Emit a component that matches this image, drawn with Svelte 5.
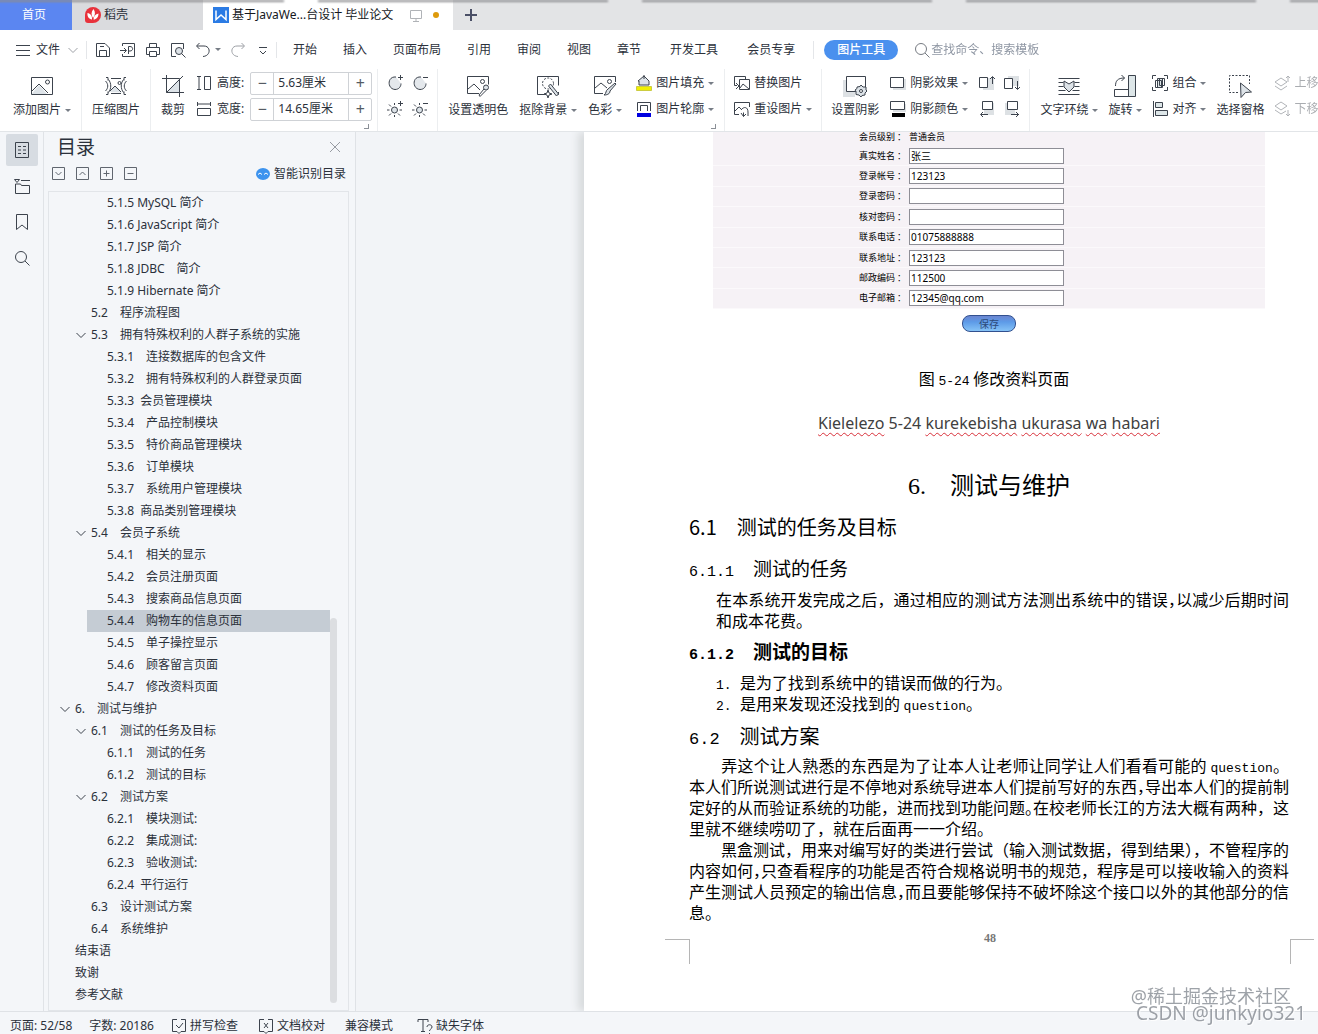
<script lang="ts">
	// Types/constants
	type TocEntry = { depth: 1 | 2 | 3, text: string, open?: boolean }

	const menuTabs = ['开始', '插入', '页面布局', '引用', '审阅', '视图', '章节', '开发工具', '会员专享']

	const toc: TocEntry[] = [
		{ depth: 3, text: '5.1.5 MySQL 简介' },
		{ depth: 3, text: '5.1.6 JavaScript 简介' },
		{ depth: 3, text: '5.1.7 JSP 简介' },
		{ depth: 3, text: '5.1.8 JDBC　简介' },
		{ depth: 3, text: '5.1.9 Hibernate 简介' },
		{ depth: 2, text: '5.2　程序流程图' },
		{ depth: 2, text: '5.3　拥有特殊权利的人群子系统的实施', open: true },
		{ depth: 3, text: '5.3.1　连接数据库的包含文件' },
		{ depth: 3, text: '5.3.2　拥有特殊权利的人群登录页面' },
		{ depth: 3, text: '5.3.3  会员管理模块' },
		{ depth: 3, text: '5.3.4　产品控制模块' },
		{ depth: 3, text: '5.3.5　特价商品管理模块' },
		{ depth: 3, text: '5.3.6　订单模块' },
		{ depth: 3, text: '5.3.7　系统用户管理模块' },
		{ depth: 3, text: '5.3.8  商品类别管理模块' },
		{ depth: 2, text: '5.4　会员子系统', open: true },
		{ depth: 3, text: '5.4.1　相关的显示' },
		{ depth: 3, text: '5.4.2　会员注册页面' },
		{ depth: 3, text: '5.4.3　搜索商品信息页面' },
		{ depth: 3, text: '5.4.4　购物车的信息页面' },
		{ depth: 3, text: '5.4.5　单子操控显示' },
		{ depth: 3, text: '5.4.6　顾客留言页面' },
		{ depth: 3, text: '5.4.7　修改资料页面' },
		{ depth: 1, text: '6.　测试与维护', open: true },
		{ depth: 2, text: '6.1　测试的任务及目标', open: true },
		{ depth: 3, text: '6.1.1　测试的任务' },
		{ depth: 3, text: '6.1.2　测试的目标' },
		{ depth: 2, text: '6.2　测试方案', open: true },
		{ depth: 3, text: '6.2.1　模块测试:' },
		{ depth: 3, text: '6.2.2　集成测试:' },
		{ depth: 3, text: '6.2.3　验收测试:' },
		{ depth: 3, text: '6.2.4  平行运行' },
		{ depth: 2, text: '6.3　设计测试方案' },
		{ depth: 2, text: '6.4　系统维护' },
		{ depth: 1, text: '结束语' },
		{ depth: 1, text: '致谢' },
		{ depth: 1, text: '参考文献' },
	]

	const fields = [
		['真实姓名', '张三'],
		['登录帐号', '123123'],
		['登录密码', ''],
		['核对密码', ''],
		['联系电话', '01075888888'],
		['联系地址', '123123'],
		['邮政编码', '112500'],
		['电子邮箱', '12345@qq.com'],
	]

	// Drawn on a 24 unit grid for large icons, 16 for small ones
	const largeIcons: Record<string, string> = {
		picture: '<path d="M1.5 3.5h21v17h-21z"/><path fill="#dde3e8" d="M2 19.5 9 11l8 9H2z" stroke="none"/><path d="m2 17 7-7 9 9"/><circle cx="17.500" cy="8" r="2"/>',
		compress: '<path d="M7 4.500h10M7 19.500h10"/><path fill="#dde3e8" d="m6 18 5-6 7 6.500z" stroke="none"/><path d="m6 17 5-5 6 6"/><circle cx="15.500" cy="9" r="1.500"/><path d="M2 3.500h2v3M2 20.500h2v-3M22 3.500h-2v3M22 20.500h-2v-3M1.500 7c3 3 3 7 0 10M4.500 5.500c3 4 3 9 0 13M22.500 7c-3 3-3 7 0 10M19.500 5.500c-3 4-3 9 0 13"/>',
		crop: '<path fill="#dde3e8" d="M5 18.500 18 5v13.500z" stroke="none"/><path d="M5.500 1v17.500H23M1 4.500h17.500V23M5.500 18.500 22 2"/>',
		transparent: '<path d="M13 19.500H1.500v-17h21v8"/><path d="m2 15 6-5 6 6"/><circle cx="16.500" cy="7.500" r="2"/><circle cx="20" cy="13.500" r="2.500" fill="#dde3e8"/><path d="m18 15-5 6 1 1.500 6-6"/>',
		matting: '<path d="M10 20.500H1.500v-18h21v9M20 20.500h2.500V18"/><circle cx="12" cy="9.500" r="5.500" stroke-dasharray="2 1.500"/><path fill="#dde3e8" d="m12.500 12 2-2 8 10-2 2z"/><path d="m12 16 1 3 3 1-3 1-1 3-1-3-3-1 3-1z" fill="#fff"/>',
		tint: '<path d="M10 19.500H1.500v-17h21V8"/><path d="m2 14 6-5 6 5"/><circle cx="16.500" cy="7.500" r="2"/><path fill="#dde3e8" d="m15 15 7-6 1 1-6 7c0 3-3 4-6 4 3-2 1-4 4-6z"/>',
		shadow: '<path fill="#dde1e4" stroke="none" d="M0 6h12v17H0z"/><path fill="#fff" d="M3.500 2.500h19v15h-19z"/><path fill="#dde3e8" d="m18 11 2 2h3v3l1 1-2 2v2l-3 .500-1 1.500-2-2-3-.500v-3l-1-1.500 2-1.500v-1.500l3-.500z"/><circle cx="18" cy="17" r="1.500" fill="#fff"/>',
		wrap: '<path d="M1.500 4.500h21M1.500 20.500h21M1.500 8.500h5M1.500 12.500h5M1.500 16.500h7M17.500 8.500h5M17.500 12.500h5M15.500 16.500h7"/><path fill="#dde3e8" d="m7 7 5 3 5-3v6l-5 5-5-5z"/>',
		rotate: '<path fill="#dde6e8" d="M15.500 1.500h7v21h-7z"/><path d="M1.500 15.500h14v7h-14zM2.500 12c0-5 2-8 9-8M8.500 1l3 3-3 3"/>',
		pane: '<path d="M10 18.500H1.500v-17h20V10" stroke-dasharray="2 1.500"/><path fill="#dde3e8" d="m12.500 9 11 9-6 .500-4.500 5z"/>',
	}

	const smallIcons: Record<string, string> = {
		menu: '<path d="M1 3.500h14M1 8.500h14M1 13.500h14"/>',
		save: '<path d="M1.500 1.500H10L14.500 6v8.500h-13zM4.500 14.500v-6h7v6M5 4.500h4"/>',
		exportFile: '<path d="M2.500 4V1.500h12v13h-12V12M0 8.500h6M4 6l2.500 2.500L4 11M8.500 12V4.500H10c3.500 0 3.500 4.500 0 4.500H8.500"/>',
		print: '<path d="M4.500 5V1.500h7V5M4 12.500H1.500V5.500h13v7H12M4.500 9.500h7v5h-7z"/>',
		preview: '<path d="M6 14.500H1.500v-13h12V7"/><circle cx="9" cy="9" r="3.500" fill="#dde3e8"/><path d="m11.500 11.500 4 4"/>',
		undo: '<path d="M4.500 1 1.500 4l3 3M2 4h7c7 0 7 10-1 10.500"/>',
		redo: '<path d="m11.500 1 3 3-3 3M14 4H7c-7 0-7 10 1 10.500"/>',
		expand: '<path d="M4 5.500h8M5 9l3 3 3-3"/>',
		height: '<path d="M1 1.500h4M3 1.500v13M1 14.500h4M8.500 1.500h6v13h-6z"/>',
		width: '<path d="M1.500 1v4M1.500 3h13M14.500 1v4M1.500 7.500h13v7h-13z"/>',
		contrastUp: '<path d="M9 2c-9-1-9 12-1 12.500 4 0 6-3 6-6" fill="#e4e8ec"/><path d="M13.500 0v5M11 2.500h5"/>',
		contrastDown: '<path d="M9 2c-9-1-9 12-1 12.500 4 0 6-3 6-6" fill="#e4e8ec"/><path d="M11 2.500h5"/>',
		brightUp: '<circle cx="7.500" cy="9" r="3" fill="#dde3e8"/><path d="M7.500 2v2M7.500 14v2M0 9h2.500M12.500 9H15M2 3.500 4 5.500M2 14.500l2-2M13 14.500l-2-2M13.500 0v5M11 2.500h5"/>',
		brightDown: '<circle cx="7.500" cy="9" r="3" fill="#dde3e8"/><path d="M7.500 2v2M7.500 14v2M0 9h2.500M12.500 9H15M2 3.500 4 5.500M2 14.500l2-2M13 14.500l-2-2M11 2.500h5"/>',
		fill: '<path fill="#dde3e8" d="M2 6 8 1l5 5v4H3V6zM8 0v4"/><path fill="#f1f000" stroke="#a0a000" stroke-width=".500" d="M.500 11.500h15v4H.500z"/>',
		outline: '<path d="M1.500 10V1.500h13V10M4.500 10V4.500h7V10"/><path fill="#0000e0" stroke="none" d="M1 12h14v4H1z"/>',
		replace: '<path d="M3 10.500H.500v-9h11V4M5.500 4.500h10v10h-10zM6 13l3-4 6 5M2 8l3 3-3 3"/>',
		reset: '<path d="M5 13.500H.500v-12h15V6M1 10l4-4 3 3M7 9c3-4 7-3 7 2v4M9.500 15.500v-4M7 12l2.500 3.500L12 13"/>',
		shadowFx: '<path fill="#dde1e4" stroke="none" d="M3 4h13v11H3z"/><path fill="#fff" d="M.500 2.500h13v10H.500z"/>',
		shadowColor: '<path fill="#dde1e4" stroke="none" d="M3 3h13v8H3z"/><path fill="#fff" d="M.500.500h14v8H.500z"/><path fill="#000" stroke="none" d="M2 12h13v4H2z"/>',
		nudgeUp: '<path fill="#dde1e4" stroke="none" d="M4 3h11v12H4z"/><path fill="#fff" d="M.500 2.500h8v10h-8z"/><path d="M13.500 9V2M11 4l2.500-2.500L16 4"/>',
		nudgeDown: '<path fill="#dde1e4" stroke="none" d="M4 1h11v10H4z"/><path fill="#fff" d="M.500 3.500h8v10h-8z"/><path d="M13.500 6v8M11 12l2.500 2.500L16 12"/>',
		nudgeLeft: '<path fill="#dde1e4" stroke="none" d="M5 2h10v12H5z"/><path fill="#fff" d="M3.500.500h10v8h-10z"/><path d="M9 13.500H2M4 11l-2.500 2.500L4 16"/>',
		nudgeRight: '<path fill="#dde1e4" stroke="none" d="M1 2h10v12H1z"/><path fill="#fff" d="M3.500.500h10v8h-10z"/><path d="M7 13.500h8M12 11l2.500 2.500L12 16"/>',
		group: '<path fill="#dde6e8" d="M5.500 3.500h5v9h-5z"/><path d="M3.500 5.500h6v7h-6zM7.500 3.500h5v7h-5zM.500 4V.500H4M12 .500h3.500V4M.500 12v3.500H4M12 15.500h3.500V12"/>',
		align: '<path d="M1.500 0v16"/><path fill="#dde6e8" d="M3.500 1.500h7v5h-7zM3.500 9.500h12v5h-12z"/>',
		layerUp: '<path d="m7 3 6 4-6 4-6-4zM1 11l6 4 6-4M14 7V1M12 3l2-2 2 2"/>',
		layerDown: '<path d="m7 1 6 4-6 4-6-4zM1 9l6 4 5-3M14 9v6M12 13l2 2 2-2"/>',
		search: '<circle cx="7" cy="7" r="5.500"/><path d="m11 11 4.500 4.500"/>',
		chevron: '<path d="m3.500 6 4.500 4.500L12.500 6"/>',
		close: '<path d="m3 3 10 10M13 3 3 13"/>',
		outlineList: '<path d="M1.500.500h13v15h-13zM4 4.500h3M9 4.500h3M4 8h3M9 8h3M4 11.500h3M9 11.500h3"/>',
		chapters: '<path d="M.500 1.500h5L3 4.500zM7 2.500h9M1.500 6v9.500h14v-8h-8l-1-1.500h-5"/>',
		bookmark: '<path d="M2.500.500h11v15L8 11l-5.500 4.500z"/>',
		boxDown: '<path d="M2.500 2.500h12v12h-12zM5.500 7 8.500 10l3-3"/>',
		boxUp: '<path d="M2.500 2.500h12v12h-12zM5.500 10 8.500 7l3 3"/>',
		boxPlus: '<path d="M2.500 2.500h12v12h-12zM5.500 8.500h6M8.500 5.500v6"/>',
		boxMinus: '<path d="M2.500 2.500h12v12h-12zM5.500 8.500h6"/>',
		spell: '<path d="M6 1.500H1.500v12H6l2 2 2-2h4.500v-12H10M5 7l3 3 4-5"/>',
		proof: '<path d="M6 1.500H1.500v12H6l2 2 2-2h4.500v-12H10M6 5l4 5M10 5l-4 5"/>',
		font: '<path d="M1 4V1.500h10V4M6 1.500v12M4 13.500h4M10 9c0-3 5-3 5 0 0 2-2.500 2-2.500 4M12.500 15v1"/>',
		monitor: '<path d="M2.500 3.500h11v8h-11zM8 12v2M5 14.500h6"/>',
		smart: '<ellipse cx="8" cy="8" rx="7" ry="6" fill="#3d93ee" stroke="none"/><path stroke="#fff" d="M3 8.500 5 7l2 1.500M9 8.500 11 7l2 1.500"/>',
		docer: '<path d="M8 0a8 8 0 1 1 0 16H3a3 3 0 0 1-3-3V8a8 8 0 0 1 8-8z" fill="#e8323c" stroke="none"/><path fill="#fff" stroke="none" d="M8.500 2c2 3 2 6-.500 9-2-3-2-6 .500-9zM2.500 6c3 .500 5 3 4.500 6.500-3-.500-5-3-4.500-6.500zM13.500 6.500c-3 .500-5 2.500-5 6 3 0 5-2.500 5-6z"/>',
		writer: '<path fill="#2b7be4" stroke="none" d="M0 0h16v16H0z"/><path stroke="#fff" stroke-width="1.500" d="M3 3.500v9l5-4.500 5 4.500v-9"/>',
	}


	// State
	let selected = $state('5.4.4　购物车的信息页面')
	let height = $state('5.63厘米')
	let width = $state('14.65厘米')
</script>


{#snippet small(name: string)}
	<svg class="small" viewBox="0 0 16 16" aria-hidden="true">{@html smallIcons[name]}</svg>
{/snippet}

{#snippet bigTool(name: string, label: string, caret = false)}
	<button class="big-tool">
		<svg class="large" viewBox="0 0 24 24" aria-hidden="true">{@html largeIcons[name]}</svg>
		<span class="label" class:caret>{label}</span>
	</button>
{/snippet}

{#snippet rowTool(name: string, label: string, caret = false)}
	<button class="row-tool">
		{@render small(name)}
		<span class="label" class:caret>{label}</span>
	</button>
{/snippet}

{#snippet iconTool(name: string, label: string)}
	<button class="icon-tool" aria-label={label}>{@render small(name)}</button>
{/snippet}


<div class="app">
	<header>
		<div class="file-tabs">
			<div class="edge"><i></i><i></i><i></i><i></i><i></i></div>
			<button class="home">首页</button>
			<button class="docer">{@render small('docer')}稻壳</button>
			<button class="document">
				{@render small('writer')}
				<span>基于JavaWe...台设计 毕业论文</span>
				<span class="monitor">{@render small('monitor')}</span>
				<span class="unsaved"></span>
			</button>
			<button class="add" aria-label="新建"><svg viewBox="0 0 12 12"><path d="M6 0v12M0 6h12" /></svg></button>
		</div>

		<div class="menu">
			<button class="file">{@render small('menu')}<span>文件</span><span class="faded">{@render small('chevron')}</span></button>
			<div class="quick">
				{@render iconTool('save', '保存')}
				{@render iconTool('exportFile', '输出为PDF')}
				{@render iconTool('print', '打印')}
				{@render iconTool('preview', '打印预览')}
				<button class="icon-tool undo caret" aria-label="撤销">{@render small('undo')}</button>
				<button class="icon-tool faded" aria-label="恢复">{@render small('redo')}</button>
				{@render iconTool('expand', '更多')}
			</div>
			<nav class="menu-tabs">
				{#each menuTabs as tab}
					<button class:wide={tab.length === 4 && tab !== '页面布局'}>{tab}</button>
				{/each}
			</nav>
			<button class="picture-tools">图片工具</button>
			<label class="search">
				{@render small('search')}
				<input type="text" placeholder="查找命令、搜索模板" aria-label="查找命令" />
			</label>
		</div>

		<div class="ribbon">
			<div class="group">{@render bigTool('picture', '添加图片', true)}</div>
			<div class="group">{@render bigTool('compress', '压缩图片')}</div>
			<div class="group corner tight">
				{@render bigTool('crop', '裁剪')}
				<div class="stack">
					<div class="size">
						{@render small('height')}
						<label for="pic-height">高度:</label>
						<div class="spinner">
							<button aria-label="减小高度">−</button>
							<input id="pic-height" type="text" bind:value={height} />
							<button aria-label="增大高度">+</button>
						</div>
					</div>
					<div class="size">
						{@render small('width')}
						<label for="pic-width">宽度:</label>
						<div class="spinner">
							<button aria-label="减小宽度">−</button>
							<input id="pic-width" type="text" bind:value={width} />
							<button aria-label="增大宽度">+</button>
						</div>
					</div>
				</div>
			</div>
			<div class="group narrow">
				<div class="pairs">
					{@render iconTool('contrastUp', '增加对比度')}
					{@render iconTool('contrastDown', '降低对比度')}
					{@render iconTool('brightUp', '增加亮度')}
					{@render iconTool('brightDown', '降低亮度')}
				</div>
			</div>
			<div class="group corner">
				{@render bigTool('transparent', '设置透明色')}
				{@render bigTool('matting', '抠除背景', true)}
				{@render bigTool('tint', '色彩', true)}
				<div class="stack spaced">
					{@render rowTool('fill', '图片填充', true)}
					{@render rowTool('outline', '图片轮廓', true)}
				</div>
			</div>
			<div class="group narrow">
				<div class="stack">
					{@render rowTool('replace', '替换图片')}
					{@render rowTool('reset', '重设图片', true)}
				</div>
			</div>
			<div class="group narrow">
				{@render bigTool('shadow', '设置阴影')}
				<div class="stack">
					{@render rowTool('shadowFx', '阴影效果', true)}
					{@render rowTool('shadowColor', '阴影颜色', true)}
				</div>
				<div class="pairs">
					{@render iconTool('nudgeUp', '阴影上移')}
					{@render iconTool('nudgeDown', '阴影下移')}
					{@render iconTool('nudgeLeft', '阴影左移')}
					{@render iconTool('nudgeRight', '阴影右移')}
				</div>
			</div>
			<div class="group">
				{@render bigTool('wrap', '文字环绕', true)}
				{@render bigTool('rotate', '旋转', true)}
				<div class="stack">
					{@render rowTool('group', '组合', true)}
					{@render rowTool('align', '对齐', true)}
				</div>
				{@render bigTool('pane', '选择窗格')}
				<div class="stack disabled">
					{@render rowTool('layerUp', '上移')}
					{@render rowTool('layerDown', '下移')}
				</div>
			</div>
		</div>
	</header>

	<main>
		<aside class="rail">
			<button class="active" aria-label="目录">{@render small('outlineList')}</button>
			<button aria-label="章节">{@render small('chapters')}</button>
			<button aria-label="书签">{@render small('bookmark')}</button>
			<button aria-label="查找">{@render small('search')}</button>
		</aside>

		<aside class="contents">
			<div class="contents-head">
				<h2>目录</h2>
				<button class="icon-tool faded" aria-label="关闭">{@render small('close')}</button>
			</div>
			<div class="contents-tools">
				{@render iconTool('boxDown', '展开')}
				{@render iconTool('boxUp', '收起')}
				{@render iconTool('boxPlus', '增加')}
				{@render iconTool('boxMinus', '减少')}
				<button class="smart">{@render small('smart')}智能识别目录</button>
			</div>
			<div class="tree">
				<ul>
					{#each toc as entry}
						<li class="depth-{entry.depth}">
							<a
								href="#{entry.text.split(/\s/)[0]}"
								class:selected={entry.text === selected}
								onclick={() => { selected = entry.text }}
							>
								<span class="twisty">{#if entry.open}{@render small('chevron')}{/if}</span>
								<span>{entry.text}</span>
							</a>
						</li>
					{/each}
				</ul>
				<div class="scrollbar"><div class="thumb"></div></div>
			</div>
		</aside>

		<section class="workspace">
			<article class="paper">
				<form class="profile" onsubmit={event => event.preventDefault()}>
					<div class="profile-body">
						<div class="level"><span>会员级别 ：</span><span>普通会员</span></div>
						<div class="fields">
							{#each fields as [name, value], i}
								<div class="field">
									<label for="field-{i}">{name} ：</label>
									<input id="field-{i}" type="text" {value} />
								</div>
							{/each}
						</div>
					</div>
					<button class="save">保存</button>
				</form>

				<p class="caption">图 <span class="mono">5-24</span> 修改资料页面</p>
				<p class="translated"><u>Kielelezo</u> 5-24 <u>kurekebisha</u> <u>ukurasa</u> <u>wa</u> <u>habari</u></p>

				<h1><span>6.</span>　测试与维护</h1>
				<h2>6.1　测试的任务及目标</h2>

				<h3><span class="mono">6.1.1</span>　测试的任务</h3>
				<div class="text indented">
					<p class="full">在本系统开发完成之后，通过相应的测试方法测出系统中的错误<i>，</i>以减少后期时间</p>
					<p>和成本花费。</p>
				</div>

				<h3 class="strong"><span class="mono">6.1.2</span>　测试的目标</h3>
				<ol class="text indented">
					<li>是为了找到系统中的错误而做的行为。</li>
					<li>是用来发现还没找到的 <span class="mono">question</span>。</li>
				</ol>

				<h2><span class="mono">6.2</span>　测试方案</h2>
				<div class="text">
					<p class="full">　　弄这个让人熟悉的东西是为了让本人让老师让同学让人们看看可能的 <span class="mono">question</span>。</p>
					<p class="full">本人们所说测试进行是不停地对系统导进本人们提前写好的东西<i>，</i>导出本人们的提前制</p>
					<p class="full">定好的从而验证系统的功能，进而找到功能问题<i>。</i>在校老师长江的方法大概有两种，这</p>
					<p>里就不继续唠叨了，就在后面再一一介绍。</p>
					<p class="full">　　黑盒测试，用来对编写好的类进行尝试（输入测试数据，得到结果<i>）</i>，不管程序的</p>
					<p class="full">内容如何<i>，</i>只查看程序的功能是否符合规格说明书的规范，程序是可以接收输入的资料</p>
					<p class="full">产生测试人员预定的输出信息<i>，</i>而且要能够保持不破坏除这个接口以外的其他部分的信</p>
					<p>息。</p>
				</div>

				<footer><span class="crop-left"></span><b>48</b><span class="crop-right"></span></footer>
			</article>
		</section>
	</main>

	<div class="status">
		<span>页面: 52/58</span>
		<span>字数: 20186</span>
		<button>{@render small('spell')}拼写检查</button>
		<button>{@render small('proof')}文档校对</button>
		<span class="compat">兼容模式</span>
		<button>{@render small('font')}缺失字体</button>
	</div>

	<div class="watermark">
		<div class="site">@稀土掘金技术社区</div>
		<div class="author">CSDN @junkyio321</div>
	</div>
</div>


<style>
	:global(body) {
		margin: 0;
	}

	.app {
		position: relative;
		display: grid;
		grid-template: auto 1fr auto / minmax(0, 1fr);
		min-height: 100vh;
		overflow: hidden;
		background: #f4f6f9;
		color: #2b313b;
		font: 12px/18px "Noto Sans", "Noto Sans CJK SC", sans-serif;
	}

	button,
	input {
		font: inherit;
		color: inherit;
		padding: 0;
		border: none;
		background: none;
		white-space: nowrap;
	}

	h1, h2, h3, p, ul, ol {
		margin: 0;
		padding: 0;
		font-weight: 400;
	}

	svg {
		display: block;
		flex: none;
		fill: none;
		stroke: #3c434d;
	}

	.small {
		width: 16px;
		height: 16px;
	}

	.large {
		width: 24px;
		height: 24px;
	}

	.faded {
		opacity: 0.5;
	}

	.icon-tool {
		display: grid;
		place-items: center;
	}

	.caret::after {
		content: '';
		display: inline-block;
		flex: none;
		margin-left: 4px;
		vertical-align: middle;
		border: 3px solid transparent;
		border-top-color: #777d86;
		border-bottom: none;
	}

	/* File tabs */
	.file-tabs {
		position: relative;
		display: flex;
		height: 30px;
		background: #e3e4e6;
	}

	.edge {
		position: absolute;
		inset: 0 0 auto -6px;
		display: flex;
		gap: 34px;
		height: 2px;

		& i {
			flex: 0 0 290px;
			background: #8c8d90;
			filter: blur(1px);
		}
	}

	.home {
		width: 72px;
		padding-right: 4px;
		background: #5b86f1;
		color: #fff;
	}

	.docer {
		display: flex;
		align-items: center;
		gap: 3px;
		width: 131px;
		padding-left: 13px;
		background: #dadbde;
	}

	.document {
		display: flex;
		align-items: center;
		gap: 3px;
		width: 250px;
		padding-left: 10px;
		background: #fff;
		color: #15181d;
	}

	.monitor {
		margin-left: 12px;
		opacity: 0.4;
	}

	.unsaved {
		width: 6px;
		height: 6px;
		margin-left: 6px;
		border-radius: 50%;
		background: #dd9a0c;
	}

	.add {
		width: 36px;
		padding-left: 12px;

		& svg {
			width: 12px;
			stroke: #4a4f66;
			stroke-width: 2px;
		}
	}

	/* Menu */
	.menu {
		display: flex;
		align-items: center;
		height: 39px;
		background: #fff;
	}

	.file {
		display: flex;
		align-items: center;
		gap: 5px;
		width: 72px;
		margin-left: 15px;
		border-right: 1px solid #e4e6e9;
	}

	.quick {
		display: flex;
		gap: 9px;
		width: 181px;
		padding-left: 8px;
		border-right: 1px solid #e4e6e9;
		box-sizing: content-box;
	}

	.undo {
		display: flex;
		align-items: center;
		width: 26px;
	}

	.menu-tabs {
		display: flex;
		gap: 26px;
		padding: 0 18px 0 16px;
		border-right: 1px solid #e4e6e9;
	}

	.wide {
		margin-left: 3px;
	}

	.picture-tools {
		width: 74px;
		height: 20px;
		margin-left: 10px;
		border-radius: 10px;
		background: #4a90ee;
		color: #fff;
		font-weight: 500;
	}

	.search {
		display: flex;
		align-items: center;
		gap: 1px;
		margin-left: 16px;
		opacity: 0.7;

		& input {
			width: 140px;
		}

		& input::placeholder {
			color: #5f6a7c;
			opacity: 1;
		}
	}

	/* Ribbon */
	.ribbon {
		display: flex;
		height: 62px;
		padding-left: 3px;
		overflow: hidden;
		background: #fff;
		border-bottom: 1px solid #e2e5e8;
	}

	.group {
		position: relative;
		display: flex;
		flex: none;
		align-items: flex-start;
		gap: 11px;
		padding: 0 10px;
		border-right: 1px solid #eceef0;

		&:last-child {
			gap: 10px;
			border: none;
		}
	}

	.tight {
		padding-right: 5px;
	}

	.narrow {
		padding: 0 9px;
	}

	.corner::after {
		content: '';
		position: absolute;
		right: 8px;
		bottom: 2px;
		width: 4px;
		height: 4px;
		border: solid #8b9097;
		border-width: 0 1px 1px 0;
	}

	.big-tool {
		display: flex;
		flex-direction: column;
		align-items: center;
		gap: 3px;
		padding-top: 5px;
	}

	.label {
		white-space: nowrap;
	}

	.stack {
		display: grid;
		grid-template-rows: 26px 26px;
		padding-top: 1px;
	}

	.spaced {
		margin-left: 3px;
	}

	.row-tool {
		display: flex;
		align-items: center;
		gap: 4px;
	}

	.pairs {
		display: grid;
		grid-template: 26px 26px / 16px 16px;
		column-gap: 9px;
		padding-top: 1px;
	}

	.size {
		display: flex;
		align-items: center;

		& label {
			margin: 0 6px 0 5px;
		}
	}

	.spinner {
		display: grid;
		grid-template-columns: 22px 76px 22px;
		height: 21px;
		border: 1px solid #cfd2d6;
		border-radius: 2px;

		& input {
			min-width: 0;
			padding-left: 4px;
			border: solid #cfd2d6;
			border-width: 0 1px;
		}

		& button {
			color: #555b64;
			font-size: 16px;
		}
	}

	.disabled {
		opacity: 0.4;
	}

	/* Side panels */
	main {
		display: grid;
		grid-template-columns: 44px 312px minmax(0, 1fr);
	}

	.rail {
		display: flex;
		flex-direction: column;
		align-items: center;
		gap: 4px;
		padding-top: 2px;
		border-right: 1px solid #e0e3e7;

		& button {
			display: grid;
			place-items: center;
			width: 32px;
			height: 32px;
			border-radius: 2px;
		}

		& .active {
			background: #d7dce2;
		}
	}

	.contents {
		display: flex;
		flex-direction: column;
		padding: 0 6px 0 4px;
		border-right: 1px solid #dfe2e6;
	}

	.contents-head {
		display: flex;
		align-items: center;
		justify-content: space-between;
		height: 30px;
		padding: 0 6px 0 9px;

		& h2 {
			font-size: 19px;
			line-height: 28px;
		}
	}

	.contents-tools {
		display: flex;
		align-items: center;
		gap: 8px;
		height: 21px;
		padding: 0 3px 8px 2px;

		& .icon-tool {
			opacity: 0.8;
		}
	}

	.smart {
		display: flex;
		align-items: center;
		gap: 3px;
		margin: 2px 0 0 auto;
	}

	.tree {
		display: grid;
		grid-template-columns: 1fr 18px;
		flex: 1;
		border: 1px solid #e2e5e9;

		& ul {
			list-style: none;
		}

		& a {
			display: flex;
			align-items: center;
			height: 22px;
			padding-left: 2px;
			color: inherit;
			text-decoration: none;
			white-space: pre;
		}

		& .selected {
			background: #c5ccd4;
		}
	}

	.depth-1 {
		margin-left: 6px;
	}

	.depth-2 {
		margin-left: 22px;
	}

	.depth-3 {
		margin-left: 38px;
	}

	.twisty {
		width: 18px;
	}

	.scrollbar {
		display: grid;
		grid-template-rows: 426fr 385fr 7fr;
	}

	.thumb {
		grid-row: 2;
		width: 7px;
		border-radius: 4px;
		background: #dcdee1;
	}

	/* Page */
	.workspace {
		display: grid;
		grid-template-columns: minmax(0, 1fr);
		padding-left: 228px;
		background: #f2f4f7;
	}

	.paper {
		padding: 0 29px 0 105px;
		background: #fff;
		box-shadow: -6px 0 8px #d8dbdd;
		clip-path: inset(0 0 0 -14px);
		color: #000;
		font: 16px/21px "Noto Sans CJK SC", sans-serif;
	}

	.profile {
		display: flex;
		flex-direction: column;
		align-items: center;
		gap: 6px;
		padding: 0 24px;
		font-size: 9px;
		line-height: 12px;
	}

	.profile-body {
		width: 100%;
		background: #f6f2f6;
	}

	.level,
	.field {
		display: grid;
		grid-template-columns: 196px 155px;
		align-items: center;
	}

	.level {
		height: 14px;
		align-items: start;
		line-height: 10px;

		& span:first-child {
			padding-left: 146px;
		}
	}

	.fields {
		display: grid;
		grid-template-rows: repeat(8, 1fr);
		height: 163px;
	}

	.field {
		border-bottom: 1px solid #fbf9fb;

		& label {
			padding-left: 146px;
			white-space: nowrap;
		}

		& input {
			height: 16px;
			box-sizing: border-box;
			padding: 0 1px;
			border: 1px solid #8e8e96;
			background: #fff;
			font: 10px/12px "Noto Sans", "Noto Sans CJK SC", sans-serif;
		}
	}

	.save {
		width: 54px;
		height: 17px;
		border: 1px solid #31508f;
		border-radius: 8px;
		background: linear-gradient(#6c86d0, #5d9be8 40%, #86c3f6);
		color: #2d4a78;
		font-size: 10px;
		line-height: 14px;
	}

	.caption {
		margin-top: 34px;
		padding-left: 10px;
		line-height: 24px;
		text-align: center;
	}

	.mono {
		font-family: "Liberation Mono", monospace;
		font-size: 13px;
		line-height: 1;
	}

	.translated {
		margin-top: 21px;
		color: #404040;
		font: 16px/24px "Noto Sans", sans-serif;
		text-align: center;

		& u {
			text-decoration: underline wavy #d8303a 1px;
			text-underline-offset: 3px;
			text-decoration-skip-ink: none;
		}
	}

	h1 {
		margin-top: 31px;
		font-size: 24px;
		line-height: 36px;
		text-align: center;

		& span {
			font-family: "Liberation Serif", serif;
			line-height: 1;
		}
	}

	.paper h2 {
		margin-top: 11px;
		font-size: 20px;
		line-height: 28px;

		& .mono {
			font-size: 17px;
		}
	}

	h3 {
		margin: 15px 0 9px;
		font-size: 19px;
		line-height: 24px;

		& .mono {
			font-size: 15px;
		}
	}

	.strong {
		margin-top: 8px;
		font-weight: 700;
	}

	.indented {
		padding-left: 27px;
	}

	.text {
		white-space: nowrap;

		& i {
			font-style: normal;
			font-feature-settings: "halt";
		}
	}

	.full {
		text-align: justify;
		text-align-last: justify;
	}

	ol {
		list-style: none;
		counter-reset: item;

		& li::before {
			counter-increment: item;
			content: counter(item) '.';
			display: inline-block;
			width: 24px;
			font-family: "Liberation Mono", monospace;
			font-size: 13px;
			line-height: 1;
		}
	}

	.paper ol + h2 {
		margin-top: 8px;
	}

	h2 + .text {
		margin-top: 5px;
	}

	footer {
		display: grid;
		grid-template-columns: 25px 1fr 24px;
		align-items: start;
		margin: 3px -25px 0 -24px;
		padding-bottom: 40px;
		color: #777;
		text-align: center;

		& b {
			font: 700 12px/24px "Liberation Serif", serif;
		}
	}

	.crop-left,
	.crop-right {
		height: 24px;
		margin-top: 13px;
		border-top: 1px solid #b5b5b5;
	}

	.crop-left {
		border-right: 1px solid #b5b5b5;
	}

	.crop-right {
		border-left: 1px solid #b5b5b5;
	}

	/* Status bar */
	.status {
		display: flex;
		gap: 17px;
		padding: 6px 10px 0;
		border-top: 1px solid #dfe2e6;
		line-height: 16px;

		& button {
			display: flex;
			align-items: center;
			gap: 3px;
			margin-right: 3px;
		}
	}

	.compat {
		margin-right: 7px;
	}

	.watermark {
		position: absolute;
		right: 12px;
		bottom: 12px;
		width: 176px;
		color: #8d9299;
		font-size: 18px;
		line-height: 17px;
		opacity: 0.85;
		text-align: right;
		text-shadow: 1px 1px #fff;
		white-space: nowrap;
	}

	.site {
		padding-right: 15px;
	}

	.author {
		font-size: 19px;
	}
</style>
